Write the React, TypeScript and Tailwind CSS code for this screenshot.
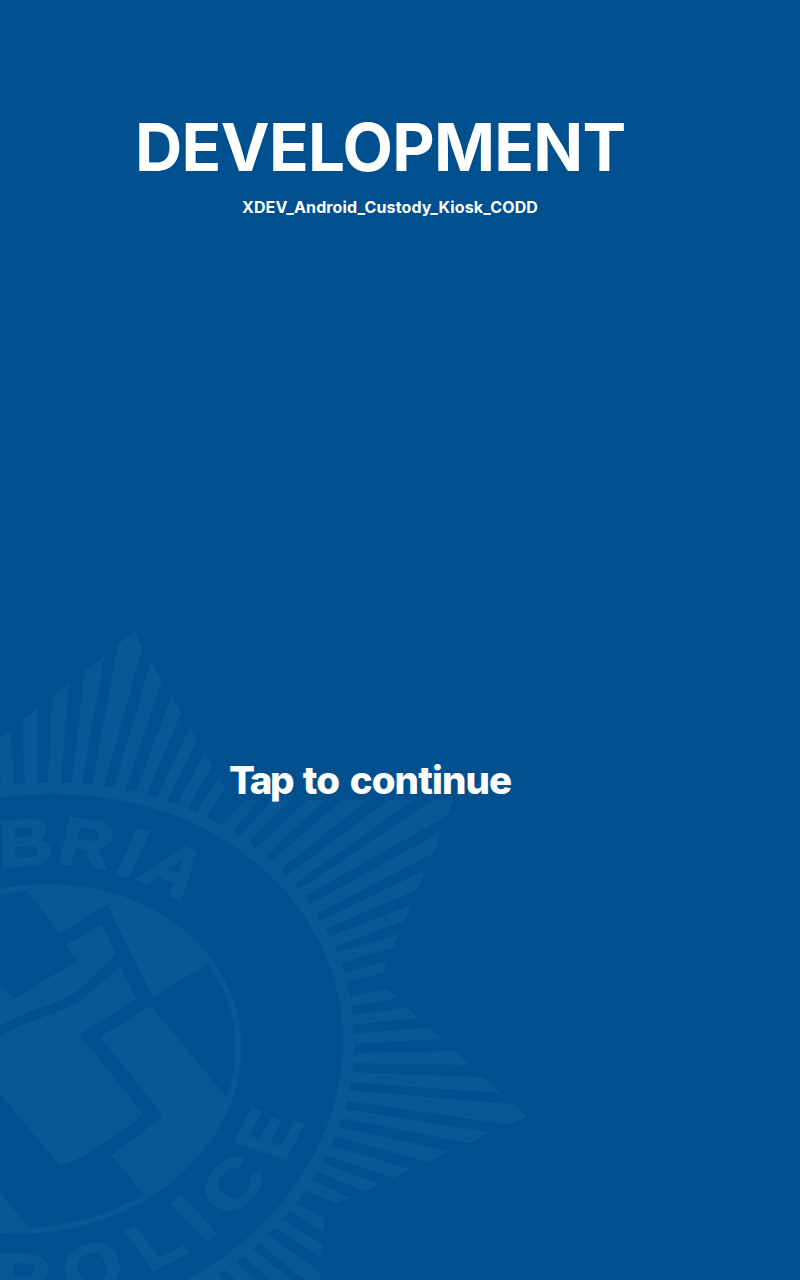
type Point = [number, number];

interface Letter {
  char: string;
  left: number;
  right: number;
  base: Point;
  top: Point;
  end: Point;
}

const CAP_HEIGHT = 0.688;

// Each letter sits on its own skewed baseline around the crest.
const letters: Letter[] = [
  { char: 'B', left: 0.073, right: 0.675, base: [4.5, 867], top: [2.5, 821.5], end: [50, 863.5] },
  { char: 'R', left: 0.068, right: 0.715, base: [60, 863.5], top: [71, 818], end: [107, 869.5] },
  { char: 'I', left: 0.067, right: 0.211, base: [116.5, 874.5], top: [137.8, 829.3], end: [127.5, 877.3] },
  { char: 'A', left: 0, right: 0.722, base: [136, 878.5], top: [167.3, 838.3], end: [181.5, 901] },
  { char: 'P', left: 0.068, right: 0.626, base: [0, 1301], top: [1, 1254], end: [45.5, 1302] },
  { char: 'O', left: 0.042, right: 0.735, base: [76, 1299], top: [59.5, 1256.5], end: [125, 1279.5] },
  { char: 'L', left: 0.073, right: 0.58, base: [153.8, 1270.3], top: [126.2, 1231.2], end: [187.5, 1253] },
  { char: 'I', left: 0.067, right: 0.211, base: [206.9, 1240.5], top: [172.2, 1203.2], end: [215.2, 1233] },
  { char: 'C', left: 0.046, right: 0.68, base: [232.7, 1218], top: [197.7, 1190.6], end: [268, 1179] },
  { char: 'E', left: 0.068, right: 0.62, base: [285.5, 1158.8], top: [235.2, 1141.8], end: [302.8, 1125.5] },
];

const rays = [
  '3,792 -6,741 0,737 11,730 14,792',
  '25,790 22.3,720 37.3,708.7 36.7,790',
  '47.5,788 52,696.7 69,684 60.5,788',
  '71,788 84.7,671.3 104.3,656 81.5,788',
  '91,789 118.3,644 134.3,631.7 142.7,647.3 103,790',
  '112.5,792 150.7,661.7 162,680 124,794',
  '134,798 171.3,696 181.3,712.7 144,800',
  '154,803 190,727.7 197.3,740.7 164,806',
  '174,810 204.7,754 212,766 184,814',
  '194,817 218.7,778 225.3,789 203,822',
  '219,829 244.3,800 258.3,800 229,837',
  '235,841.5 272.3,800 289,800 244,848',
  '251,853 307.3,800 325.3,800 260,861',
  '266,866 341.7,800 367.7,800 275,874',
  '281,880 388.3,800 413.3,800 289,888',
  '295,892 432.3,800 454,800 446.7,816 300,899',
  '307,906 440.7,832 434.3,852.7 313,916',
  '317,922 425.7,870 418,889.3 323,930',
  '326,938 410.7,905.3 404.7,920.7 331,948',
  '334,954 399,934 393.7,947.3 339,964',
  '342,973 388,960.7 384,972.7 345,982',
  '347,997 387.7,988.7 397.3,998 348,1007',
  '349,1016 407.7,1007.3 418.7,1018 350,1025',
  '350,1034 429.3,1027.3 440.7,1039 350,1044',
  '350,1053 455.7,1051 469,1065 349,1063',
  '349,1072 484.7,1077.3 500,1093 346,1082',
  '345,1090 514,1104.3 526.7,1116.7 510,1124.7 341,1100',
  '340,1108 490,1132.3 468.7,1143.3 336,1117',
  '334,1126 449.3,1151.3 428,1161.7 329,1135',
  '326,1144 410.7,1169.3 394,1178 320,1153',
  '317,1161 378.3,1184 364.7,1191 312,1170',
  '306,1178 349.3,1197.3 336,1204 300,1187',
  '291,1200 324,1218 324,1231.7 285,1208',
  '276,1215 322.3,1244.3 321,1258.3 269,1224',
  '262,1230 320,1272.3 319,1292 253,1238',
  '246,1243 312,1297 295,1301 237,1251',
  '229,1255 270,1294 252,1298 220,1264',
  '211,1267 240,1296 222,1298 198,1275',
];

function letterMatrix({ left, right, base, top, end }: Letter) {
  const width = right - left;
  const ax = (end[0] - base[0]) / width;
  const ay = (end[1] - base[1]) / width;
  const cx = (base[0] - top[0]) / CAP_HEIGHT;
  const cy = (base[1] - top[1]) / CAP_HEIGHT;
  return `matrix(${ax / 100} ${ay / 100} ${cx / 100} ${cy / 100} ${base[0] - left * ax} ${base[1] - left * ay})`;
}

function Crest() {
  return (
    <svg className="absolute inset-0 h-full w-full fill-[#0a5893]" viewBox="0 0 800 1280" aria-hidden="true">
      <defs>
        <clipPath id="shield">
          <ellipse cx="33.5" cy="1059" rx="208" ry="173" transform="rotate(-10.4 33.5 1059)" />
        </clipPath>
      </defs>

      {rays.map((points) => (
        <polygon key={points} points={points} />
      ))}

      <ellipse
        cx="33.5"
        cy="1059"
        rx="316.8"
        ry="268.6"
        transform="rotate(-11.6 33.5 1059)"
        fill="none"
        className="stroke-[#0a5893]"
        strokeWidth="11.5"
      />
      <ellipse
        cx="33.5"
        cy="1059"
        rx="206"
        ry="170.7"
        transform="rotate(-10.4 33.5 1059)"
        fill="none"
        className="stroke-[#0a5893]"
        strokeWidth="6"
      />

      <g clipPath="url(#shield)">
        <polygon points="20,882 26.7,890.3 60,933 107.3,905 152.7,996.7 207.3,964 260,930 260,860 20,860" />
        <path d="M-5 979L13.3 999.3L77.3 960.7L65.7 945L101.7 924L116 955.3C101 967 89 984 70 996C53 1006 22 1011 -5 1029Z" />
        <path d="M-5 1040C20 1022 45 1018 66.7 1008C87 999 101 981 120 966.7L136.7 999L79.3 1034.3L143.3 1114C119 1134 92 1154 60 1166L-5 1088Z" />
        <path d="M151 1006L100 1036.7L162.7 1115C147 1130 129 1142 111.7 1155.3L144 1195L160 1230L260 1180L227.3 1098.3Z" />
        <polygon points="-5,1186 30,1229 34,1245 -5,1245" />
      </g>

      <g
        fontFamily="Liberation Sans, Arial, sans-serif"
        fontSize="100"
        fontWeight="700"
        className="stroke-[#0a5893]"
        strokeWidth="3"
      >
        {letters.map((letter) => (
          <text key={`${letter.char}${letter.base[0]}`} transform={letterMatrix(letter)}>
            {letter.char}
          </text>
        ))}
      </g>
    </svg>
  );
}

export default function App() {
  return (
    <main className="relative flex h-[1280px] w-[800px] flex-col overflow-hidden bg-[#00508f] font-['Inter',sans-serif] font-bold text-white">
      <Crest />
      <header className="relative flex flex-col pt-[115px]">
        <h1 className="pl-[135px] text-[65.5px] leading-[66px] tracking-[-0.7px] whitespace-nowrap">DEVELOPMENT</h1>
        <p className="mt-[16px] pl-[242px] text-[16px] leading-5 tracking-[0.12px] whitespace-nowrap">
          XDEV_Android_Custody_Kiosk_CODD
        </p>
      </header>
      <button
        type="button"
        className="relative mt-[543px] self-start pl-[229px] text-left text-[38.5px] leading-10 font-extrabold tracking-[-0.9px] [word-spacing:3px] whitespace-nowrap"
      >
        <span className="tracking-[-2.4px]">Tap</span> to continue
      </button>
    </main>
  );
}
